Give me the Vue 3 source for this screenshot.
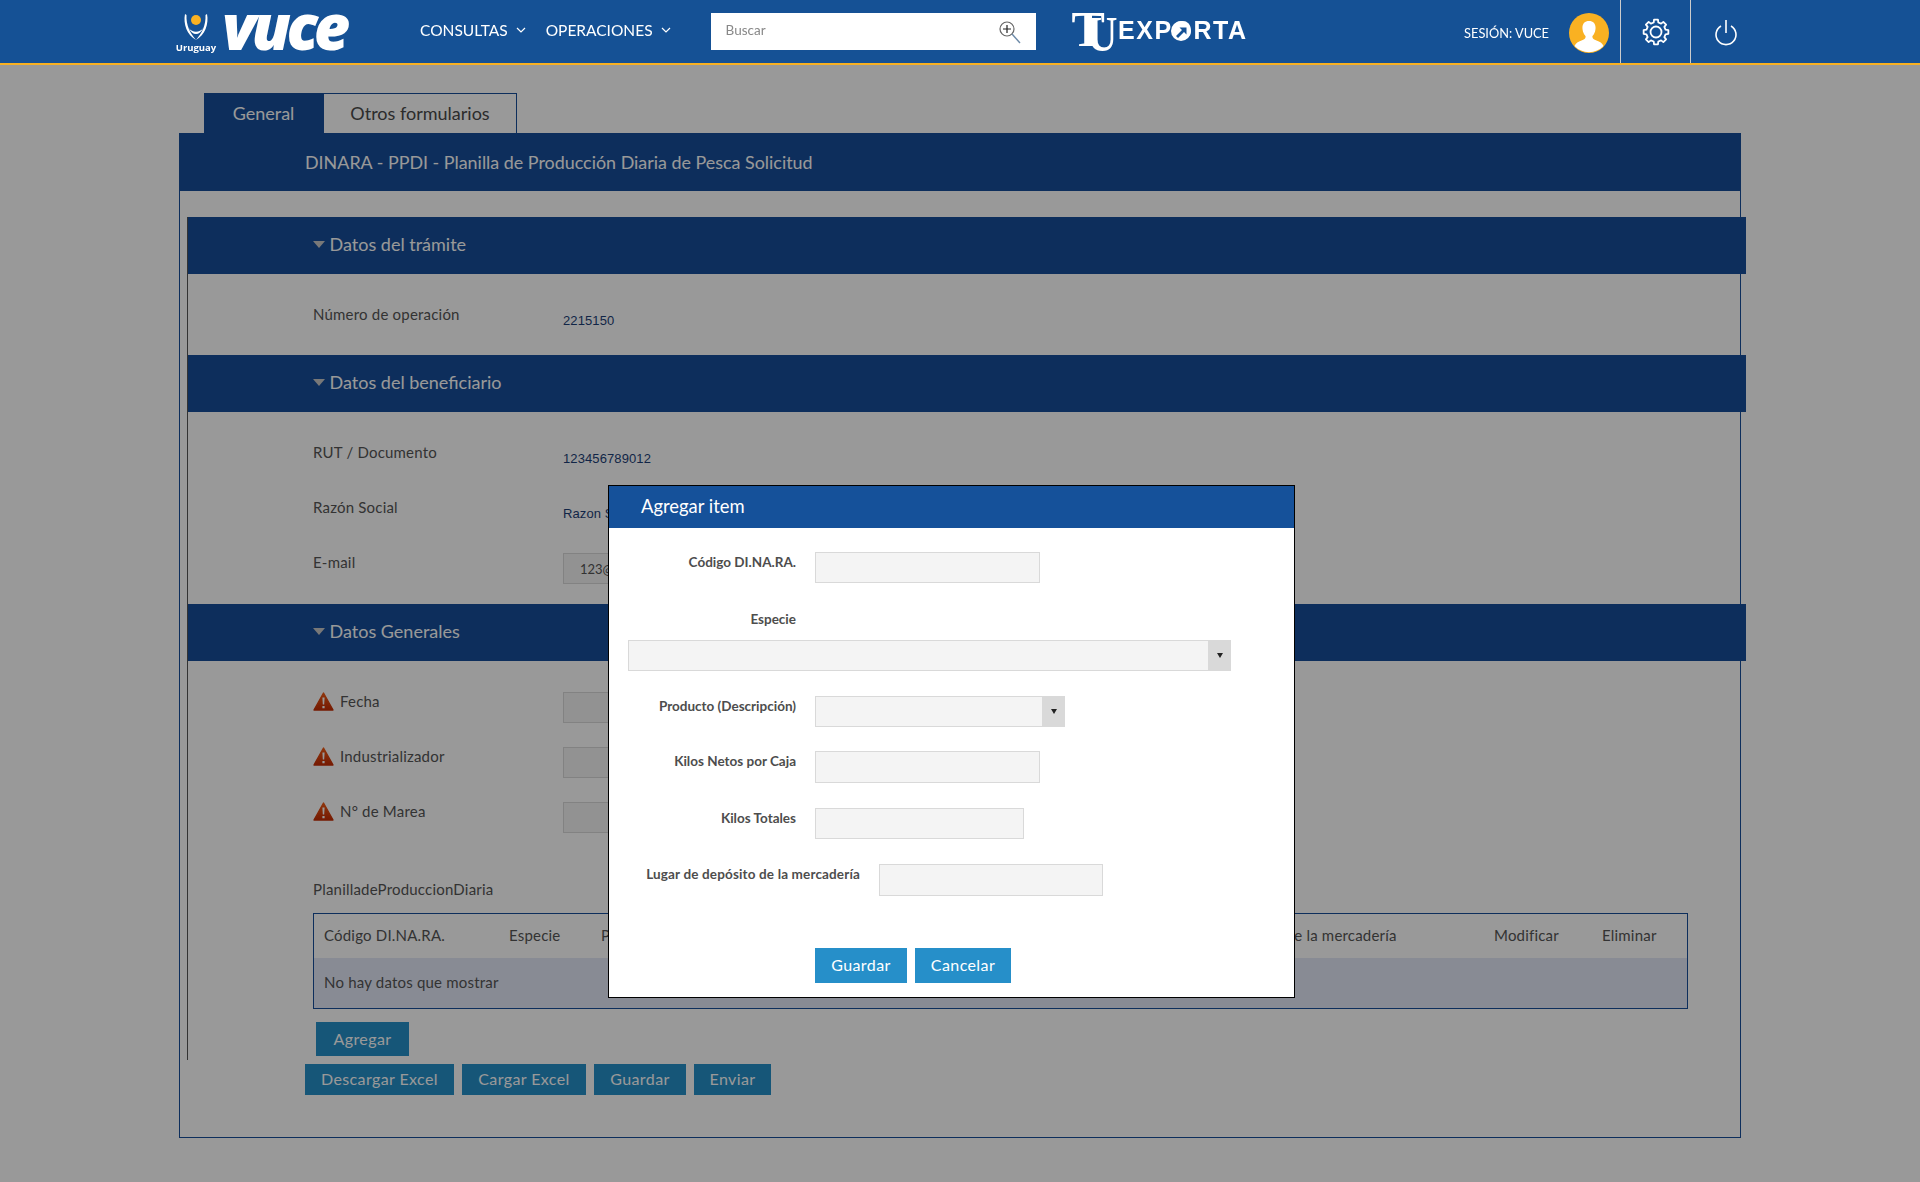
<template>
  <div class="page">
    <header class="topbar">
      <div class="logo-vuce">
        <div class="escudo">
          <svg width="40" height="27" viewBox="0 0 40 27">
            <circle cx="20" cy="6" r="5" fill="#f9b122" />
            <path d="M9 0C7 10 11 21 20 26C14 19 10 11 10.500 1Z" fill="#fff" />
            <path d="M31 0C33 10 29 21 20 26C26 19 30 11 29.500 1Z" fill="#fff" />
            <path d="M13 14C16 19 24 19 27 14C24 22 16 22 13 14Z" fill="#fff" />
          </svg>
          <span>Uruguay</span>
        </div>
        <span class="vuce-text">vuce</span>
      </div>

      <nav class="menu">
        <a v-for="item in menu" :key="item" class="menu-item">
          {{ item }}
          <svg width="10" height="6" viewBox="0 0 10 6"><path d="M1 1l4 4 4-4" fill="none" stroke="#fff" stroke-width="1.2" /></svg>
        </a>
      </nav>

      <div class="search">
        <input type="text" placeholder="Buscar" />
        <svg width="24" height="24" viewBox="0 0 24 24">
          <circle cx="9" cy="9" r="7" fill="none" stroke="#666" stroke-width="1.2" />
          <path d="M9 5v8M5 9h8" stroke="#222" stroke-width="1.2" />
          <path d="M14 14l8 9" stroke="#6d8aa8" stroke-width="1.4" />
        </svg>
      </div>

      <div class="logo-exporta">
        <span class="big-t">T</span><span class="big-u">U</span>
        <span class="exporta-text">EXPORTA</span>
        <svg class="o-arrow" width="20" height="20" viewBox="0 0 20 20">
          <circle cx="10" cy="10" r="10" fill="#fff" />
          <path d="M5 15l6-6-2.500-2.500h7v7L13 11l-6 6z" fill="#155195" />
        </svg>
      </div>

      <div class="session">
        <span class="session-text">SESIÓN: VUCE</span>
        <svg class="avatar" width="40" height="40" viewBox="0 0 40 40">
          <circle cx="20" cy="20" r="20" fill="#f9b122" />
          <path d="M20 8c-4.500 0-7 3-6.500 8 .3 3 1.500 5.500 3 7 .5 2-1 3.500-4 4.500-3.500 1.200-5.500 2.500-7 5.500a20 20 0 0 0 29 0c-1.500-3-3.500-4.300-7-5.500-3-1-4.500-2.500-4-4.500 1.500-1.500 2.700-4 3-7 .5-5-2-8-6.500-8z" fill="#fff" />
        </svg>
      </div>
      <div class="icon-cell">
        <svg width="30" height="30" viewBox="0 0 30 30">
          <path :d="gearPath" fill="none" stroke="#fff" stroke-width="1.8" stroke-linejoin="round" />
          <circle cx="15" cy="15" r="5.500" fill="none" stroke="#fff" stroke-width="1.8" />
        </svg>
      </div>
      <div class="icon-cell">
        <svg width="30" height="30" viewBox="0 0 30 30">
          <path d="M15 3v13M10 9a10 10 0 1 0 10 0" fill="none" stroke="#fff" stroke-width="1.6" />
        </svg>
      </div>
    </header>

    <main class="contenido">
      <div class="tabs">
        <div class="tab activo">General</div>
        <div class="tab">Otros formularios</div>
      </div>

      <div class="panel">
        <div class="panel-title">DINARA - PPDI - Planilla de Producción Diaria de Pesca Solicitud</div>

        <div class="secciones">
          <div class="seccion-bar"><i class="triangulo"></i>Datos del trámite</div>
          <div class="seccion-body body-tramite">
            <div class="fila">
              <label>Número de operación</label>
              <span class="valor">2215150</span>
            </div>
          </div>

          <div class="seccion-bar"><i class="triangulo"></i>Datos del beneficiario</div>
          <div class="seccion-body body-benef">
            <div class="fila">
              <label>RUT / Documento</label>
              <span class="valor">123456789012</span>
            </div>
            <div class="fila">
              <label>Razón Social</label>
              <span class="valor">Razon Social</span>
            </div>
            <div class="fila">
              <label>E-mail</label>
              <input class="campo-fondo" type="text" value="123@123.com" />
            </div>
          </div>

          <div class="seccion-bar"><i class="triangulo"></i>Datos Generales</div>
          <div class="seccion-body">
            <div v-for="campo in obligatorios" :key="campo" class="fila">
              <label class="con-icono">
                <svg width="21" height="19" viewBox="0 0 21 19">
                  <defs>
                    <linearGradient id="alerta" x1="0" y1="0" x2="0" y2="1">
                      <stop offset="0" stop-color="#ee5a14" />
                      <stop offset="1" stop-color="#c42c04" />
                    </linearGradient>
                  </defs>
                  <path d="M10.500 1L20 18H1Z" fill="url(#alerta)" stroke="url(#alerta)" stroke-width="1.400" stroke-linejoin="round" />
                  <path d="M9.400 5.500h2.200l-.4 7h-1.400zM9.400 14h2.200v2.200H9.400z" fill="#fff" />
                </svg>
                {{ campo }}
              </label>
              <input class="campo-fondo" type="text" />
            </div>

            <div class="planilla-titulo">PlanilladeProduccionDiaria</div>
            <table class="grilla">
              <colgroup>
                <col v-for="(w, i) in anchos" :key="i" :style="{ width: w + 'px' }" />
              </colgroup>
              <thead>
                <tr><th v-for="col in columnas" :key="col">{{ col }}</th></tr>
              </thead>
              <tbody>
                <tr><td :colspan="columnas.length">No hay datos que mostrar</td></tr>
              </tbody>
            </table>
            <button class="btn btn-agregar">Agregar</button>
          </div>
        </div>

        <div class="acciones">
          <button class="btn b-descargar">Descargar Excel</button>
          <button class="btn b-cargar">Cargar Excel</button>
          <button class="btn b-guardar">Guardar</button>
          <button class="btn b-enviar">Enviar</button>
        </div>
      </div>
    </main>

    <div class="overlay"></div>

    <div class="modal">
      <div class="modal-header">Agregar item</div>
      <div class="modal-body">
        <div class="m-fila">
          <label>Código DI.NA.RA.</label>
          <input type="text" class="w-225" />
        </div>
        <div class="m-especie"><label>Especie</label></div>
        <div class="combo combo-especie"><input type="text" /><span class="combo-flecha"></span></div>
        <div class="m-fila m-producto">
          <label>Producto (Descripción)</label>
          <div class="combo combo-producto"><input type="text" /><span class="combo-flecha"></span></div>
        </div>
        <div class="m-fila m-netos">
          <label>Kilos Netos por Caja</label>
          <input type="text" class="w-225 alto-32" />
        </div>
        <div class="m-fila m-totales">
          <label>Kilos Totales</label>
          <input type="text" class="w-209" />
        </div>
        <div class="m-fila m-lugar">
          <label>Lugar de depósito de la mercadería</label>
          <input type="text" class="w-224 alto-32" />
        </div>
        <div class="modal-botones">
          <button class="btn m-guardar">Guardar</button>
          <button class="btn m-cancelar">Cancelar</button>
        </div>
      </div>
    </div>
  </div>
</template>

<script setup>
const menu = ['CONSULTAS', 'OPERACIONES']
const obligatorios = ['Fecha', 'Industrializador', 'N° de Marea']
const columnas = [
  'Código DI.NA.RA.',
  'Especie',
  'Producto (Descripción)',
  'Kilos Netos por Caja',
  'Kilos Totales',
  'Lugar de depósito de la mercadería',
  'Modificar',
  'Eliminar'
]
const anchos = [185, 92, 200, 180, 180, 333, 108, 95]

// engranaje de 8 dientes para el botón de configuración
function engranaje(cx, cy, rExt, rInt, dientes) {
  const pts = []
  const paso = (Math.PI * 2) / dientes
  for (let i = 0; i < dientes; i++) {
    const a = i * paso - Math.PI / 2
    const d = paso * 0.2
    const g = paso * 0.3
    pts.push([a - g, rInt], [a - d, rExt], [a + d, rExt], [a + g, rInt])
  }
  return (
    pts
      .map(([a, r], i) => `${i ? 'L' : 'M'}${(cx + r * Math.cos(a)).toFixed(2)} ${(cy + r * Math.sin(a)).toFixed(2)}`)
      .join('') + 'Z'
  )
}
const gearPath = engranaje(15, 15, 12.5, 9.8, 8)
</script>

<style>
html,
body {
  margin: 0;
  background: #fff;
}
</style>

<style scoped>
.page {
  position: relative;
  height: 1182px;
  overflow: hidden;
  font-family: Lato, "Open Sans", sans-serif;
  color: #555;
  font-size: 15px;
  letter-spacing: .2px;
}

/* barra superior */
.topbar {
  position: relative;
  z-index: 20;
  display: flex;
  align-items: center;
  box-sizing: border-box;
  height: 65px;
  padding: 0 160px 0 176px;
  background: #155195;
  border-bottom: 2px solid #f9b122;
  color: #fff;
  letter-spacing: 0;
}

.logo-vuce {
  display: flex;
  align-items: flex-start;
  width: 174px;
  height: 50px;
}

.escudo {
  display: flex;
  flex-direction: column;
  align-items: center;
  width: 40px;
  padding-top: 7px;
}

.escudo svg {
  display: block;
}

.escudo span {
  font-family: "Open Sans", sans-serif;
  font-size: 9.500px;
  font-weight: 700;
  line-height: 11px;
  margin-top: 1px;
}

.vuce-text {
  margin-left: 6px;
  font-family: "Open Sans", sans-serif;
  font-size: 63px;
  font-weight: 800;
  font-style: italic;
  line-height: 37px;
  letter-spacing: -4.500px;
}

.menu {
  display: flex;
  gap: 20px;
  margin: 0 0 3px 70px;
}

.menu-item {
  display: flex;
  align-items: center;
  gap: 8px;
  font-size: 15.500px;
}

.search {
  display: flex;
  align-items: center;
  box-sizing: border-box;
  width: 325px;
  height: 37px;
  margin-left: 40px;
  padding: 0 14px 0 15px;
  background: #fff;
}

.search input {
  flex: 1;
  margin-bottom: 3px;
  border: 0;
  outline: 0;
  padding: 0;
  font-family: Lato, sans-serif;
  font-size: 13.500px;
}

.search input::placeholder {
  color: #888;
}

.logo-exporta {
  position: relative;
  display: flex;
  align-items: center;
  margin: 0 0 2px 36px;
  width: 173px;
  height: 50px;
  color: #fff;
}

.big-t,
.big-u {
  font-family: "Liberation Serif", serif;
  font-weight: 700;
  font-size: 50px;
  line-height: 50px;
}

.big-t {
  transform: translateY(-2px);
}

.big-u {
  margin-left: -21px;
  transform: translateY(3px) scaleX(.85);
}

.exporta-text {
  margin-left: -2px;
  font-family: "Liberation Sans", sans-serif;
  font-size: 25px;
  font-weight: 700;
  letter-spacing: 1.500px;
}

.o-arrow {
  position: absolute;
  left: 99px;
  top: 15px;
}

.session {
  display: flex;
  align-items: center;
  margin-left: auto;
}

.session-text {
  margin-top: 3px;
  font-size: 12.800px;
}

.avatar {
  margin: 2px 11px 0 20px;
}

.icon-cell {
  display: flex;
  align-items: center;
  justify-content: center;
  box-sizing: border-box;
  width: 70px;
  height: 63px;
  border-left: 1px solid #ccc;
}

/* formulario detrás del modal */
.contenido {
  width: 1562px;
  margin-left: 179px;
  padding-top: 28px;
}

.tabs {
  display: flex;
  margin-left: 25px;
  height: 40px;
}

.tab {
  display: flex;
  align-items: center;
  justify-content: center;
  box-sizing: border-box;
  width: 194px;
  padding-bottom: 2px;
  border: 1px solid #174e99;
  border-bottom: 0;
  color: #4a4a4a;
  font-size: 18px;
  letter-spacing: 0;
}

.tab.activo {
  width: 119px;
  background: #174e99;
  color: #fff;
}

.panel {
  box-sizing: border-box;
  height: 1005px;
  border: 1px solid #174e99;
}

.panel-title {
  height: 57px;
  padding-left: 125px;
  background: #174e99;
  color: #fff;
  font-size: 17.900px;
  letter-spacing: 0;
  line-height: 56px;
}

.secciones {
  width: 1558px;
  margin: 26px 0 0 7px;
  padding-bottom: 4px;
  border-left: 1px solid #555;
}

.seccion-bar {
  display: flex;
  align-items: center;
  box-sizing: border-box;
  height: 57px;
  padding: 0 0 4px 125px;
  background: #174e99;
  color: #fff;
  font-size: 18px;
  letter-spacing: 0;
}

.triangulo {
  width: 0;
  height: 0;
  margin: 1px 4.500px 0 0;
  border: 6.500px solid transparent;
  border-top: 7px solid #c8c8c8;
  border-bottom: 0;
}

.seccion-body {
  padding: 31px 0 0 125px;
}

.body-tramite {
  height: 50px;
}

.body-benef {
  height: 161px;
}

.fila {
  display: flex;
  align-items: flex-start;
  height: 55px;
}

.fila label {
  display: flex;
  align-items: center;
  gap: 6px;
  width: 250px;
  margin-top: -1px;
  line-height: 20px;
}

.con-icono svg {
  flex: none;
}

.valor {
  margin-top: 6px;
  font-family: "Liberation Sans", sans-serif;
  font-size: 13px;
  letter-spacing: .1px;
  line-height: 20px;
  color: #1d3f77;
}

.campo-fondo {
  box-sizing: border-box;
  width: 225px;
  height: 31px;
  padding: 0 16px;
  border: 1px solid #d9d9d9;
  background: #f4f4f4;
  color: #555;
  font-family: Lato, sans-serif;
  font-size: 13px;
}

.planilla-titulo {
  margin-top: 22px;
  line-height: 20px;
}

.grilla {
  table-layout: fixed;
  box-sizing: border-box;
  width: 1375px;
  height: 96px;
  margin-top: 14px;
  border: 1px solid #174e99;
  border-spacing: 0;
}

.grilla th,
.grilla td {
  padding: 0 0 3px 10px;
  font-weight: 400;
  text-align: left;
  white-space: nowrap;
  overflow: hidden;
}

.grilla th {
  height: 41px;
}

.grilla td {
  background: #e3e8f7;
}

.btn {
  box-sizing: border-box;
  display: block;
  padding: 0 0 2px;
  border: 0;
  background: #268fc9;
  color: #fff;
  font-family: Lato, sans-serif;
  font-size: 16px;
  letter-spacing: .4px;
}

.btn-agregar {
  width: 93px;
  height: 34px;
  margin: 13px 0 0 3px;
}

.acciones {
  display: flex;
  gap: 8px;
  margin: 4px 0 0 125px;
}

.acciones .btn {
  height: 31px;
}

.b-descargar {
  width: 149px;
}

.b-cargar {
  width: 124px;
}

.b-guardar {
  width: 92px;
}

.b-enviar {
  width: 77px;
}

.overlay {
  position: fixed;
  inset: 0;
  z-index: 10;
  background: rgba(0, 0, 0, 0.4);
}

/* modal agregar item */
.modal {
  position: fixed;
  left: 608px;
  top: 485px;
  z-index: 30;
  box-sizing: border-box;
  width: 687px;
  height: 513px;
  border: 1px solid #000;
  background: #fff;
  letter-spacing: 0;
}

.modal-header {
  height: 42px;
  padding-left: 32px;
  background: #15519a;
  color: #fff;
  font-size: 18.400px;
  line-height: 40px;
}

.modal-body {
  padding-top: 24px;
}

.m-fila {
  display: flex;
  align-items: flex-start;
  gap: 19px;
}

.m-fila label,
.m-especie label {
  display: block;
  flex: none;
  width: 187px;
  color: #4d4d4d;
  font-size: 13.500px;
  font-weight: 700;
  line-height: 20px;
  text-align: right;
}

.modal input {
  box-sizing: border-box;
  height: 31px;
  padding: 0 8px;
  border: 1px solid #d9d9d9;
  background: #f4f4f4;
}

.modal input.alto-32 {
  height: 32px;
}

.w-225 {
  width: 225px;
}

.w-209 {
  width: 209px;
}

.w-224 {
  width: 224px;
}

.m-especie {
  margin-top: 26px;
}

.combo {
  display: flex;
  height: 31px;
}

.combo input {
  flex: 1;
  min-width: 0;
}

.combo-flecha {
  display: flex;
  align-items: center;
  justify-content: center;
  width: 22px;
  background: #d9d9d9;
}

.combo-flecha::after {
  content: "";
  width: 0;
  height: 0;
  border: 3px solid transparent;
  border-top: 5px solid #222;
  border-bottom: 0;
}

.combo-especie {
  width: 603px;
  margin: 11px 0 0 19px;
}

.combo-producto {
  width: 250px;
}

.m-producto {
  margin-top: 25px;
}

.m-netos {
  margin-top: 24px;
}

.m-totales {
  margin-top: 25px;
}

.m-lugar {
  margin-top: 25px;
}

.m-fila.m-lugar label {
  width: 251px;
  letter-spacing: .15px;
}

.modal-botones {
  display: flex;
  gap: 8px;
  margin: 52px 0 0 206px;
}

.modal-botones .btn {
  height: 35px;
}

.m-guardar {
  width: 92px;
}

.m-cancelar {
  width: 96px;
}
</style>
